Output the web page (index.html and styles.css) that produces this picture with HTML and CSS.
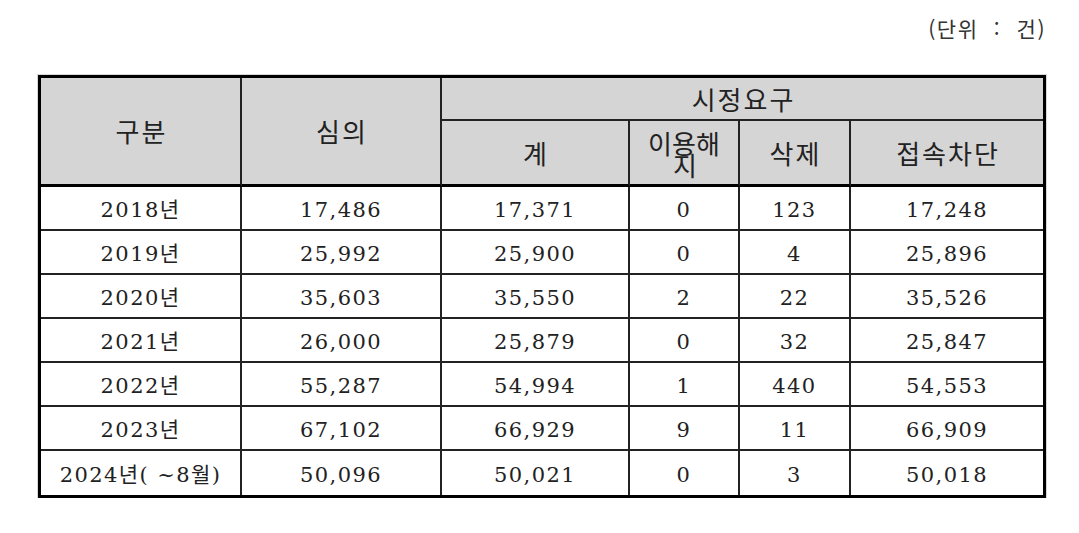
FILE: index.html
```html
<!DOCTYPE html>
<html lang="ko">
<head>
<meta charset="utf-8">
<title>시정요구 현황</title>
<link rel="stylesheet" href="styles.css">
</head>
<body>
<div class="page">
  <div class="unit">(단위 : 건)</div>
  <table class="stats">
    <colgroup>
      <col class="c1"><col class="c2"><col class="c3"><col class="c4"><col class="c5"><col class="c6">
    </colgroup>
    <thead>
      <tr class="h1">
        <th rowspan="2" class="hb">구분</th>
        <th rowspan="2" class="hb">심의</th>
        <th colspan="4" class="last">시정요구</th>
      </tr>
      <tr class="h2">
        <th class="hb">계</th>
        <th class="hb narrow"><span class="l1">이용해</span><span class="l2">지</span></th>
        <th class="hb">삭제</th>
        <th class="hb last">접속차단</th>
      </tr>
    </thead>
    <tbody>
      <tr><td>2018년</td><td>17,486</td><td>17,371</td><td>0</td><td>123</td><td class="last">17,248</td></tr>
      <tr><td>2019년</td><td>25,992</td><td>25,900</td><td>0</td><td>4</td><td class="last">25,896</td></tr>
      <tr><td>2020년</td><td>35,603</td><td>35,550</td><td>2</td><td>22</td><td class="last">35,526</td></tr>
      <tr><td>2021년</td><td>26,000</td><td>25,879</td><td>0</td><td>32</td><td class="last">25,847</td></tr>
      <tr><td>2022년</td><td>55,287</td><td>54,994</td><td>1</td><td>440</td><td class="last">54,553</td></tr>
      <tr><td>2023년</td><td>67,102</td><td>66,929</td><td>9</td><td>11</td><td class="last">66,909</td></tr>
      <tr class="end"><td>2024년( ~8월)</td><td>50,096</td><td>50,021</td><td>0</td><td>3</td><td class="last">50,018</td></tr>
    </tbody>
  </table>
</div>
</body>
</html>
```
FILE: styles.css
```css
html, body {
  margin: 0;
  padding: 0;
  background: #ffffff;
}

.page {
  padding: 14px 33px 0 38px;
  font-family: "Noto Sans CJK KR", sans-serif;
  color: #222222;
}

.unit {
  text-align: right;
  font-size: 21px;
  line-height: 28px;
  letter-spacing: 1.5px;
  word-spacing: 8px;
  color: #333333;
}

.stats {
  margin-top: 33px;
  width: 1008px;
  table-layout: fixed;
  border-collapse: separate;
  border-spacing: 0;
  border: 3px solid #000000;
  box-shadow: 0 0 0 1px #d8d8d8;
}

.c1 { width: 201px; }
.c2 { width: 200px; }
.c3 { width: 188px; }
.c4 { width: 110px; }
.c5 { width: 111px; }
.c6 { width: 192px; }

.stats th,
.stats td {
  box-sizing: border-box;
  padding: 0;
  text-align: center;
  vertical-align: middle;
  border-right: 2px solid #222222;
  border-bottom: 2px solid #222222;
}

.stats th.last,
.stats td.last {
  border-right: none;
}

.stats th {
  background: #d5d5d5;
  font-family: "Noto Sans CJK KR", sans-serif;
  font-weight: normal;
  font-size: 26px;
  letter-spacing: 2px;
  text-indent: 2px;
  color: #222222;
}

.stats th.hb {
  border-bottom: 3px solid #000000;
}

.h1 th { height: 43px; line-height: 40px; }
.h2 th { height: 66px; line-height: 60px; }

.stats th.narrow {
  line-height: 22px;
  padding: 2px 4px 0;
  letter-spacing: 0;
  text-indent: 0;
}

.narrow .l1,
.narrow .l2 {
  display: block;
}

.narrow .l2 {
  padding-left: 2px;
}

.stats td {
  height: 44px;
  font-family: "DejaVu Serif", "Noto Sans CJK KR", serif;
  font-size: 21px;
  letter-spacing: 1.4px;
  color: #222222;
  line-height: 30px;
  padding-top: 3px;
}

.stats tr.end td {
  border-bottom: none;
}
```
